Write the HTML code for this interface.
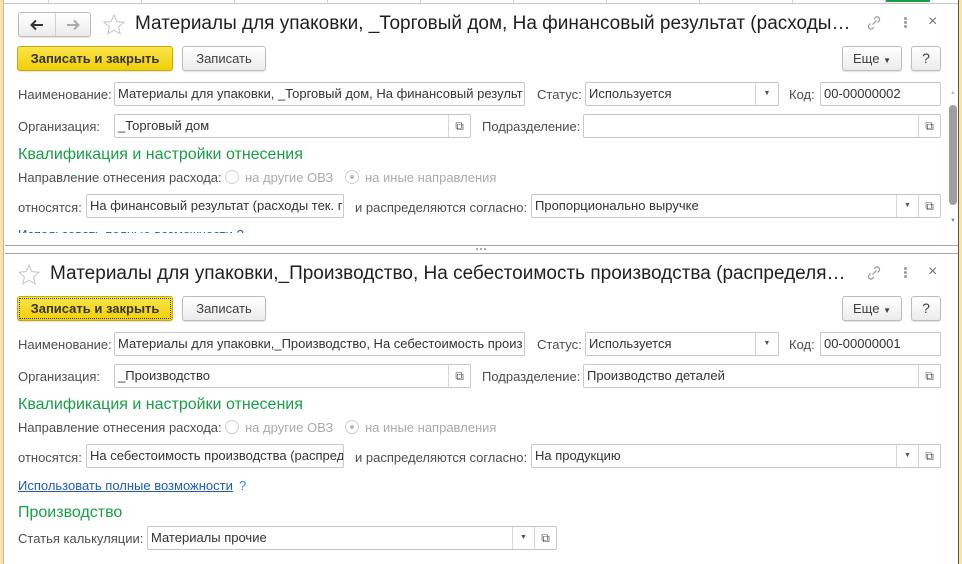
<!DOCTYPE html>
<html><head><meta charset="utf-8">
<style>
*{box-sizing:border-box;margin:0;padding:0}
body{width:962px;height:564px;overflow:hidden;background:#fff;font-family:"Liberation Sans","Noto Sans CJK SC",sans-serif;font-size:13px;color:#4d4d4d;position:relative}
.a{position:absolute;white-space:nowrap}
.lbl{color:#4d4d4d;font-size:13px;line-height:15px}
.inp{position:absolute;border:1px solid #c8c8c8;border-radius:2px;background:#fff;height:24px;color:#333;font-size:13px;line-height:22px;padding-left:3px;overflow:hidden;white-space:nowrap}
.btn{position:absolute;border:1px solid #bdbdbd;border-radius:3px;background:linear-gradient(#fff,#ececec);height:25px;text-align:center;line-height:23px;color:#404040;font-size:13px;box-shadow:0 1px 1px rgba(0,0,0,.12)}
.ybtn{background:linear-gradient(#fbe54a,#f1cf06);border-color:#c6aa0b;font-weight:bold;color:#333}
.seg{position:absolute;top:0;bottom:0;border-left:1px solid #d6d6d6;width:22px;text-align:center}
.h{color:#1a9d49;font-size:16px}
.title{font-size:19px;color:#1f1f1f}
.rad{position:absolute;width:14px;height:14px;border:1px solid #d0d0d0;border-radius:50%;background:#fff}
.gray{color:#aaa}
</style></head><body>
<div class="a" style="left:0;top:0;width:962px;height:4px;border-bottom:1px solid #c8c8c8;background:#fff"></div>
<div class="a" style="left:48px;top:0;width:1px;height:4px;background:#ccc"></div>
<div class="a" style="left:141px;top:0;width:1px;height:4px;background:#ccc"></div>
<div class="a" style="left:234px;top:0;width:1px;height:4px;background:#ccc"></div>
<div class="a" style="left:327px;top:0;width:1px;height:4px;background:#ccc"></div>
<div class="a" style="left:420px;top:0;width:1px;height:4px;background:#ccc"></div>
<div class="a" style="left:513px;top:0;width:1px;height:4px;background:#ccc"></div>
<div class="a" style="left:606px;top:0;width:1px;height:4px;background:#ccc"></div>
<div class="a" style="left:699px;top:0;width:1px;height:4px;background:#ccc"></div>
<div class="a" style="left:792px;top:0;width:1px;height:4px;background:#ccc"></div>
<div class="a" style="left:885px;top:0;width:1px;height:4px;background:#ccc"></div>
<div class="a" style="left:886px;top:0;width:44px;height:2px;background:#1a9d49"></div>
<div class="a" style="left:0;top:0;width:4px;height:564px;background:#f7e6a3;border-right:1px solid #b8b8b8"></div>
<div class="a" style="left:958px;top:0;width:4px;height:564px;background:#f7e6a3;border-left:1px solid #555"></div>

<div class="btn" style="left:18px;top:12px;width:73px;height:25px;padding:0">
 <svg class="a" style="left:10px;top:5px" width="16" height="14" viewBox="0 0 16 14"><path d="M14 7H3M7 2.5L2.5 7 7 11.5" fill="none" stroke="#333" stroke-width="2"/></svg>
 <div class="a" style="left:36px;top:0;width:1px;height:23px;background:#d0d0d0"></div>
 <svg class="a" style="left:46px;top:5px" width="16" height="14" viewBox="0 0 16 14"><path d="M2 7h11M9 2.5L13.5 7 9 11.5" fill="none" stroke="#aaa" stroke-width="2"/></svg>
</div>
<svg class="a" style="left:102px;top:13px" width="24" height="24" viewBox="0 0 24 24"><path d="M12 2l2.9 6.6 7.1.6-5.4 4.7 1.6 7-6.2-3.7-6.2 3.7 1.6-7L2 9.2l7.1-.6z" fill="none" stroke="#c4c4c4" stroke-width="1"/></svg>
<div class="a title" style="left:135px;top:13px">Материалы для упаковки, _Торговый дом, На финансовый результат (расходы…</div>
<svg class="a" style="left:865px;top:14px" width="18" height="18" viewBox="0 0 18 18"><g fill="none" stroke="#999" stroke-width="1.2"><path d="M7.5 10.5l4-4"/><path d="M9 5l1.5-1.5a2.5 2.5 0 013.5 3.5L12.5 8.5"/><path d="M9 13l-1.5 1.5a2.5 2.5 0 01-3.5-3.5L5.5 9.5"/></g></svg>
<div class="a" style="left:904px;top:17px;width:3px;height:3px;background:#999;border-radius:50%;box-shadow:0 4px 0 #999,0 8px 0 #999"></div>
<div class="a" style="left:928px;top:13px;font-size:16px;color:#777">×</div>
<div class="btn ybtn" style="left:17px;top:46px;width:156px">Записать и закрыть</div>
<div class="btn" style="left:182px;top:46px;width:84px">Записать</div>
<div class="btn" style="left:842px;top:46px;width:60px">Еще <span style="font-size:8px">&#9660;</span></div>
<div class="btn" style="left:911px;top:46px;width:30px;font-size:14px">?</div>

<div class="a lbl" style="left:18px;top:87px">Наименование:</div>
<div class="inp" style="left:114px;top:82px;width:411px">Материалы для упаковки, _Торговый дом, На финансовый результ</div>
<div class="a lbl" style="left:537px;top:87px">Статус:</div>
<div class="inp" style="left:585px;top:82px;width:194px">Используется<div class="seg" style="right:0;width:23px;font-size:7px;line-height:22px;color:#555">&#9660;</div></div>
<div class="a lbl" style="left:789px;top:87px">Код:</div>
<div class="inp" style="left:820px;top:82px;width:121px">00-00000002</div>

<div class="a lbl" style="left:18px;top:119px">Организация:</div>
<div class="inp" style="left:114px;top:114px;width:357px">_Торговый дом<div class="seg" style="right:0;font-size:12px;line-height:22px;color:#555">&#10697;</div></div>
<div class="a lbl" style="left:482px;top:119px">Подразделение:</div>
<div class="inp" style="left:583px;top:114px;width:358px"><div class="seg" style="right:0;font-size:12px;line-height:22px;color:#555">&#10697;</div></div>

<div class="a h" style="left:18px;top:146px">Квалификация и настройки отнесения</div>
<div class="a lbl" style="left:18px;top:170px">Направление отнесения расхода:</div>
<div class="rad" style="left:225px;top:170px"></div>
<div class="a lbl gray" style="left:245px;top:170px">на другие ОВЗ</div>
<div class="rad" style="left:345px;top:170px"><div class="a" style="left:4px;top:4px;width:4px;height:4px;border-radius:50%;background:#bbb"></div></div>
<div class="a lbl gray" style="left:365px;top:170px">на иные направления</div>

<div class="a lbl" style="left:18px;top:200px">относятся:</div>
<div class="inp" style="left:86px;top:194px;width:258px">На финансовый результат (расходы тек. г</div>
<div class="a lbl" style="left:355px;top:200px">и распределяются согласно:</div>
<div class="inp" style="left:531px;top:194px;width:410px">Пропорционально выручке<div class="seg" style="right:22px;font-size:7px;line-height:22px;color:#555">&#9660;</div><div class="seg" style="right:0;font-size:12px;line-height:22px;color:#555">&#10697;</div></div>
<div class="a" style="left:0;top:226px;width:940px;height:7px;overflow:hidden"><div class="a" style="left:18px;top:1px;line-height:15px;color:#1f5ab4;text-decoration:underline">Использовать полные возможности <span style="text-decoration:none">?</span></div></div>
<div class="a" style="left:950px;top:90px;font-size:6px;color:#bbb">&#9650;</div>
<div class="a" style="left:949px;top:105px;width:8px;height:100px;border-radius:4px;background:#9e9e9e"></div>
<div class="a" style="left:950px;top:218px;font-size:6px;color:#888">&#9660;</div>
<div class="a" style="left:5px;top:245px;width:953px;height:1px;background:#a8a8a8"></div>
<div class="a" style="left:476px;top:248px;width:2px;height:2px;background:#aaa;box-shadow:4px 0 0 #aaa,8px 0 0 #aaa"></div>
<div class="a" style="left:5px;top:253px;width:953px;height:1px;background:#a8a8a8"></div>

<svg class="a" style="left:17px;top:263px" width="24" height="24" viewBox="0 0 24 24"><path d="M12 2l2.9 6.6 7.1.6-5.4 4.7 1.6 7-6.2-3.7-6.2 3.7 1.6-7L2 9.2l7.1-.6z" fill="none" stroke="#c4c4c4" stroke-width="1"/></svg>
<div class="a title" style="left:50px;top:263px">Материалы для упаковки,_Производство, На себестоимость производства (распределя…</div>
<svg class="a" style="left:865px;top:264px" width="18" height="18" viewBox="0 0 18 18"><g fill="none" stroke="#999" stroke-width="1.2"><path d="M7.5 10.5l4-4"/><path d="M9 5l1.5-1.5a2.5 2.5 0 013.5 3.5L12.5 8.5"/><path d="M9 13l-1.5 1.5a2.5 2.5 0 01-3.5-3.5L5.5 9.5"/></g></svg>
<div class="a" style="left:904px;top:267px;width:3px;height:3px;background:#999;border-radius:50%;box-shadow:0 4px 0 #999,0 8px 0 #999"></div>
<div class="a" style="left:928px;top:263px;font-size:16px;color:#777">×</div>
<div class="btn ybtn" style="left:17px;top:296px;width:156px;outline:1px dotted #333;outline-offset:-3px">Записать и закрыть</div>
<div class="btn" style="left:182px;top:296px;width:84px">Записать</div>
<div class="btn" style="left:842px;top:296px;width:60px">Еще <span style="font-size:8px">&#9660;</span></div>
<div class="btn" style="left:911px;top:296px;width:30px;font-size:14px">?</div>

<div class="a lbl" style="left:18px;top:337px">Наименование:</div>
<div class="inp" style="left:114px;top:332px;width:411px">Материалы для упаковки,_Производство, На себестоимость произ</div>
<div class="a lbl" style="left:537px;top:337px">Статус:</div>
<div class="inp" style="left:585px;top:332px;width:194px">Используется<div class="seg" style="right:0;width:23px;font-size:7px;line-height:22px;color:#555">&#9660;</div></div>
<div class="a lbl" style="left:789px;top:337px">Код:</div>
<div class="inp" style="left:820px;top:332px;width:121px">00-00000001</div>

<div class="a lbl" style="left:18px;top:369px">Организация:</div>
<div class="inp" style="left:114px;top:364px;width:357px">_Производство<div class="seg" style="right:0;font-size:12px;line-height:22px;color:#555">&#10697;</div></div>
<div class="a lbl" style="left:482px;top:369px">Подразделение:</div>
<div class="inp" style="left:583px;top:364px;width:358px">Производство деталей<div class="seg" style="right:0;font-size:12px;line-height:22px;color:#555">&#10697;</div></div>

<div class="a h" style="left:18px;top:396px">Квалификация и настройки отнесения</div>
<div class="a lbl" style="left:18px;top:420px">Направление отнесения расхода:</div>
<div class="rad" style="left:225px;top:420px"></div>
<div class="a lbl gray" style="left:245px;top:420px">на другие ОВЗ</div>
<div class="rad" style="left:345px;top:420px"><div class="a" style="left:4px;top:4px;width:4px;height:4px;border-radius:50%;background:#bbb"></div></div>
<div class="a lbl gray" style="left:365px;top:420px">на иные направления</div>

<div class="a lbl" style="left:18px;top:450px">относятся:</div>
<div class="inp" style="left:86px;top:444px;width:258px">На себестоимость производства (распред</div>
<div class="a lbl" style="left:355px;top:450px">и распределяются согласно:</div>
<div class="inp" style="left:531px;top:444px;width:410px">На продукцию<div class="seg" style="right:22px;font-size:7px;line-height:22px;color:#555">&#9660;</div><div class="seg" style="right:0;font-size:12px;line-height:22px;color:#555">&#10697;</div></div>

<div class="a" style="left:18px;top:478px;color:#1f5ab4;text-decoration:underline">Использовать полные возможности</div>
<div class="a" style="left:239px;top:478px;color:#2a8dd4">?</div>
<div class="a h" style="left:18px;top:504px">Производство</div>
<div class="a lbl" style="left:18px;top:531px">Статья калькуляции:</div>
<div class="inp" style="left:147px;top:526px;width:410px">Материалы прочие<div class="seg" style="right:22px;font-size:7px;line-height:22px;color:#555">&#9660;</div><div class="seg" style="right:0;font-size:12px;line-height:22px;color:#555">&#10697;</div></div>
</body></html>
